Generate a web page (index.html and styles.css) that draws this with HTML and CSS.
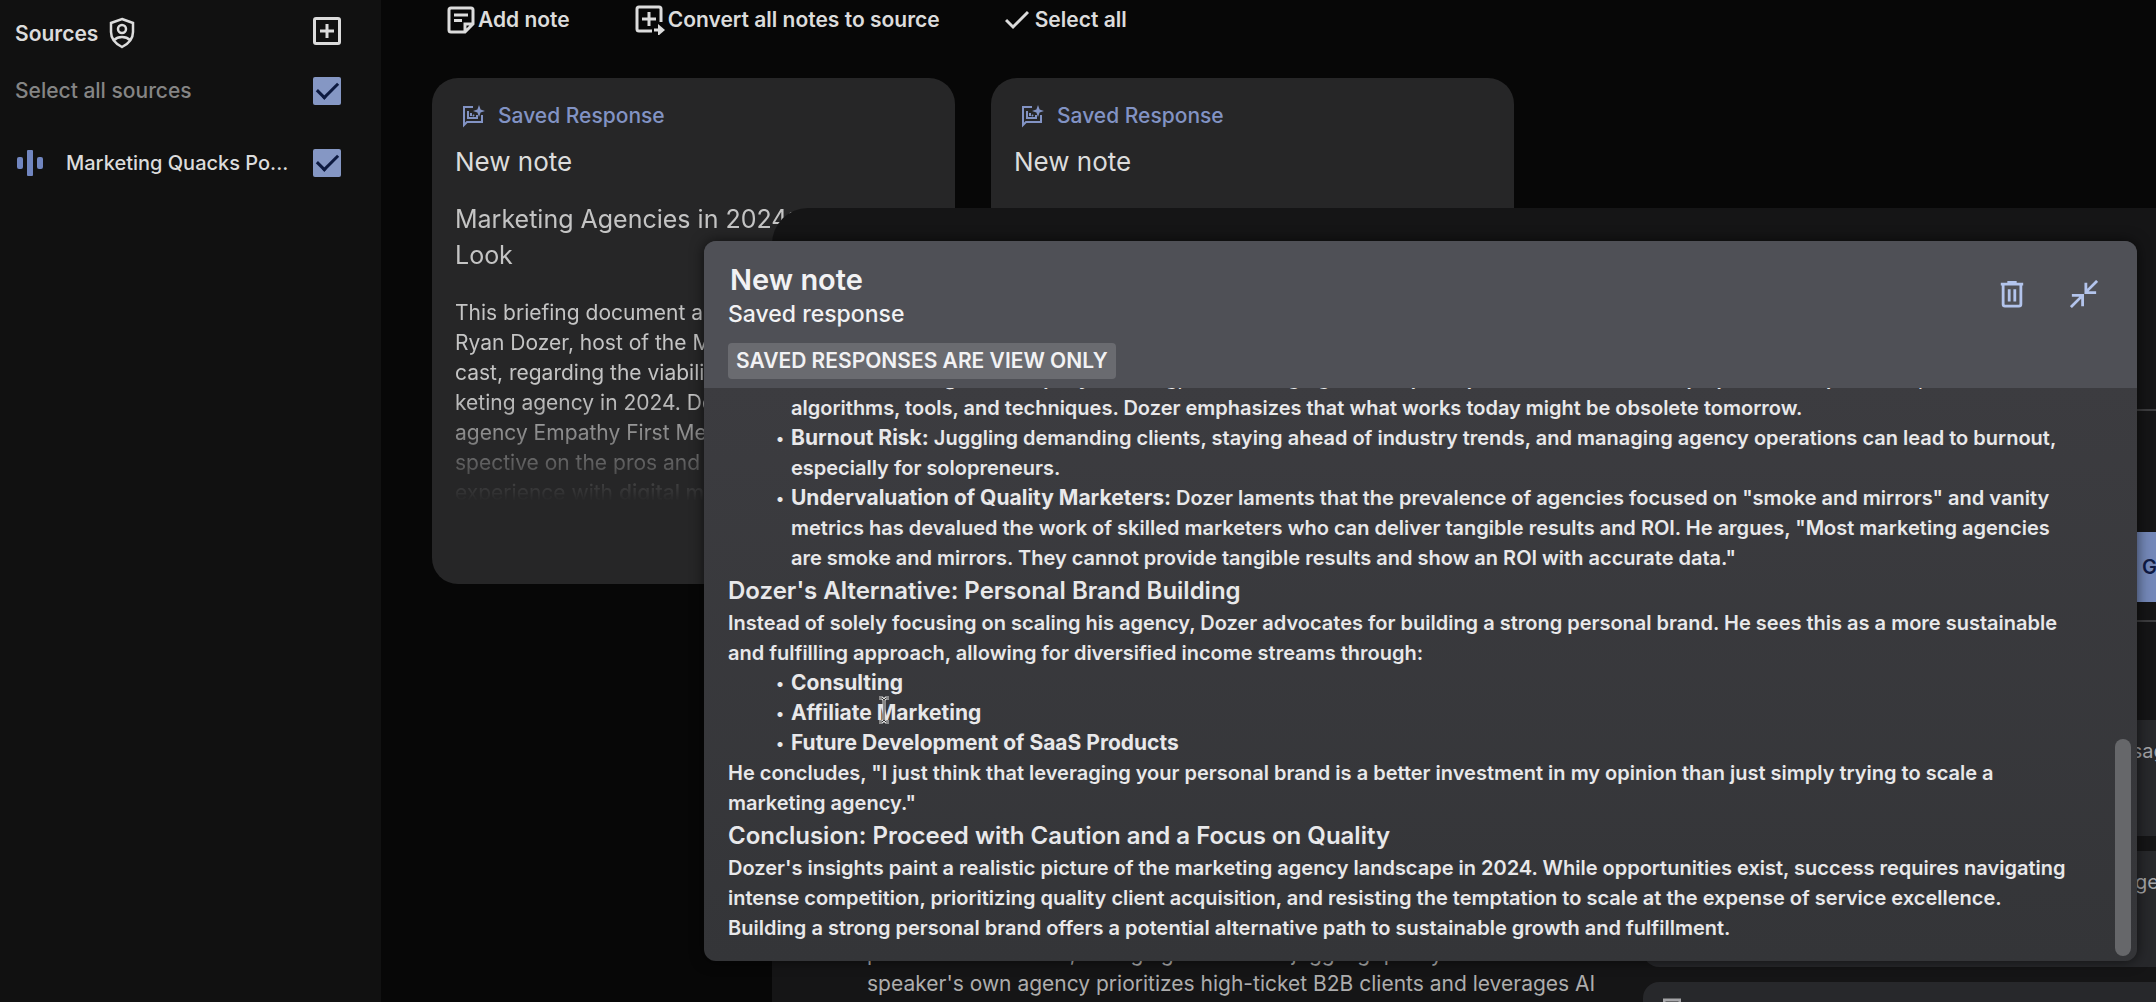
FILE: index.html
```html
<!DOCTYPE html>
<html lang="en">
<head>
    <meta charset="UTF-8">
    <title>Notebook</title>
    <link rel="stylesheet" href="styles.css">
</head>
<body>

<!-- shared icons -->
<svg class="sprite" aria-hidden="true">
    <symbol id="icon-saved" viewBox="0 0 24 24">
        <path d="M12 3H3v18l3-3h15v-7M7 7v7h9v-3M10 9v3M12 11l1 1" fill="none" stroke="currentColor" stroke-width="2"/>
        <path d="M18 1l1.600 4.400L24 7l-4.400 1.600L18 13l-1.600-4.400L12 7l4.400-1.600z" fill="currentColor"/>
    </symbol>
</svg>

<div class="app">
    <aside class="sidebar">
        <div class="sidebar-row sidebar-head">
            <h2>Sources</h2>
            <svg class="shield" viewBox="0 0 26 32" fill="none" stroke="currentColor" stroke-width="2.500">
                <path d="M13 2L24 6v9c0 7-5 12-11 15C7 27 2 22 2 15V6z"/>
                <circle cx="13" cy="12" r="4"/>
                <path d="M5 23c4-4 12-4 16 0"/>
            </svg>
            <button class="icon-btn add-source" aria-label="Add source">
                <svg viewBox="0 0 28 28" fill="none" stroke="currentColor" stroke-width="3">
                    <rect x="1.500" y="1.500" width="25" height="25" rx="1.500"/>
                    <path d="M14 7v14M7 14h14"/>
                </svg>
            </button>
        </div>
        <div class="sidebar-row select-all">
            <label for="allSources">Select all sources</label>
            <input type="checkbox" id="allSources" checked>
        </div>
        <div class="sidebar-row source">
            <svg class="wave" viewBox="0 0 26 26" fill="currentColor">
                <rect x="0" y="7" width="6" height="12" rx="2"/>
                <rect x="10" y="0" width="6" height="26" rx="1"/>
                <rect x="20" y="7" width="6" height="12" rx="2"/>
            </svg>
            <label for="source1">Marketing Quacks Po...</label>
            <input type="checkbox" id="source1" checked>
        </div>
    </aside>

    <main class="notes">
        <div class="toolbar">
            <button>
                <svg viewBox="0 0 28 28" fill="none" stroke="currentColor" stroke-width="3">
                    <path d="M18 26H4a2 2 0 0 1-2-2V4a2 2 0 0 1 2-2h20a2 2 0 0 1 2 2v14zM18 26v-8h8M7 9h14M7 14.500h8"/>
                </svg>Add note
            </button>
            <button>
                <svg class="convert" viewBox="0 0 30 30" fill="none" stroke="currentColor" stroke-width="3">
                    <path d="M17 26H4a2 2 0 0 1-2-2V4a2 2 0 0 1 2-2h20a2 2 0 0 1 2 2v13M14 7v14M7 14h14"/>
                    <path d="M19 25h5" /><path d="M23 19l7 6-7 6z" fill="currentColor" stroke="none"/>
                </svg>Convert all notes to source
            </button>
            <button class="select-notes">
                <svg class="check" viewBox="0 0 24 20" fill="none" stroke="currentColor" stroke-width="3">
                    <path d="M1 10l7 7L23 2"/>
                </svg>Select all
            </button>
        </div>

        <div class="cards">
            <article class="card">
                <div class="card-tag"><svg><use href="#icon-saved"/></svg>Saved Response</div>
                <h3>New note</h3>
                <div class="card-text">
                    <h4>Marketing Agencies in 2024: A Realistic<br>Look</h4>
                    <p>This briefing document analyzes advice by<br>
                    Ryan Dozer, host of the Marketing Quacks pod-<br>
                    cast, regarding the viability of starting a mar-<br>
                    keting agency in 2024. Dozer, who runs the<br>
                    agency Empathy First Media, offers his per-<br>
                    spective on the pros and cons based on his<br>
                    experience with <b>digital marketing</b>.</p>
                </div>
            </article>
            <article class="card">
                <div class="card-tag"><svg><use href="#icon-saved"/></svg>Saved Response</div>
                <h3>New note</h3>
            </article>
        </div>
    </main>
</div>

<section class="chat">
    <div class="summary">
        <p>potential for burnout, changing trends and juggling quality. The<br>
        speaker's own agency prioritizes high-ticket B2B clients and leverages AI</p>
    </div>
    <div class="guide">
        <div class="guide-audio">
            <button class="generate">Generate</button>
        </div>
        <div class="questions">
            <button class="question">How can a marketer grow brands with your message?</button>
            <button class="question">What are the biggest pros and cons of running agencies?</button>
            <button class="question last">
                <svg viewBox="0 0 18 18" fill="none" stroke="currentColor" stroke-width="3"><rect x="1" y="2" width="16" height="14"/></svg>
            </button>
        </div>
    </div>
</section>

<section class="note">
    <header class="note-head">
        <div>
            <h1>New note</h1>
            <p>Saved response</p>
            <span class="badge">SAVED RESPONSES ARE VIEW ONLY</span>
        </div>
        <div class="note-actions">
            <button class="icon-btn" aria-label="Delete note">
                <svg viewBox="0 0 30 30" fill="none" stroke="currentColor" stroke-width="3">
                    <path d="M3 4.500h24M10 2.500h10M5.500 5v21a2 2 0 0 0 2 2h15a2 2 0 0 0 2-2V5M12 10v13M18 10v13"/>
                </svg>
            </button>
            <button class="icon-btn" aria-label="Collapse note">
                <svg viewBox="0 0 30 30" fill="none" stroke="currentColor" stroke-width="3">
                    <path d="M29 1L17 13M17 3v10.500h11M1 29l12-12M2 16.500h11.500V28"/>
                </svg>
            </button>
        </div>
    </header>
    <div class="note-body">
        <ul>
            <li><b>Constant Change:</b> The rapidly evolving, ever-changing landscape requires marketers to keep up with new platforms,<br>
            algorithms, tools, and techniques. Dozer emphasizes that what works today might be obsolete tomorrow.</li>
            <li><b>Burnout Risk:</b> Juggling demanding clients, staying ahead of industry trends, and managing agency operations can lead to burnout, especially for solopreneurs.</li>
            <li><b>Undervaluation of Quality Marketers:</b> Dozer laments that the prevalence of agencies focused on "smoke and mirrors" and vanity metrics has devalued the work of skilled marketers who can deliver tangible results and ROI. He argues, "Most marketing agencies are smoke and mirrors. They cannot provide tangible results and show an ROI with accurate data."</li>
        </ul>
        <h2>Dozer's Alternative: Personal Brand Building</h2>
        <p>Instead of solely focusing on scaling his agency, Dozer advocates for building a strong personal brand. He sees this as a more sustainable and fulfilling approach, allowing for diversified income streams through:</p>
        <ul>
            <li><b>Consulting</b></li>
            <li><b>Affiliate Marketing</b>
                <svg class="cursor" viewBox="0 0 12 28" fill="none">
                    <path d="M1 2h3l2 2 2-2h3M6 4v20M1 26h3l2-2 2 2h3" stroke="#ddd" stroke-width="3"/>
                    <path d="M1 2h3l2 2 2-2h3M6 4v20M1 26h3l2-2 2 2h3" stroke="#333" stroke-width="1"/>
                </svg>
            </li>
            <li><b>Future Development of SaaS Products</b></li>
        </ul>
        <p>He concludes, "I just think that leveraging your personal brand is a better investment in my opinion than just simply trying to scale a marketing agency."</p>
        <h2>Conclusion: Proceed with Caution and a Focus on Quality</h2>
        <p>Dozer's insights paint a realistic picture of the marketing agency landscape in 2024. While opportunities exist, success requires navigating intense competition, prioritizing quality client acquisition, and resisting the temptation to scale at the expense of service excellence. Building a strong personal brand offers a potential alternative path to sustainable growth and fulfillment.</p>
        <div class="thumb"></div>
    </div>
</section>

</body>
</html>
```
FILE: styles.css
```css
* {
    box-sizing: border-box;
}

body {
    margin: 0;
    height: 100vh;
    overflow: hidden;
    position: relative;
    background: #070707;
    color: #dcdcdc;
    font-family: Inter, "Liberation Sans", sans-serif;
    font-size: 21px;
    line-height: 30px;
}

h1, h2, h3, h4, p, ul {
    margin: 0;
    padding: 0;
    font-weight: 500;
}

button {
    font: inherit;
    color: inherit;
    background: none;
    border: none;
    padding: 0;
}

svg {
    display: block;
    flex: none;
}

.sprite {
    position: absolute;
    width: 0;
    height: 0;
}

.app {
    display: grid;
    grid-template-columns: 381px 1fr;
    height: 100%;
}

/* sidebar */
.sidebar {
    background: #111;
    padding: 16px 40px 0 15px;
}

.sidebar-row {
    display: flex;
    align-items: center;
    height: 30px;
}

.sidebar-head h2 {
    padding-top: 5px;
    font-size: 21px;
    font-weight: 600;
}

.shield {
    width: 26px;
    height: 32px;
    margin: 4px 0 0 11px;
}

.icon-btn svg {
    width: 28px;
    height: 28px;
}

.add-source {
    margin-left: auto;
}

.select-all {
    margin-top: 30px;
    color: #858585;
    font-weight: 500;
}

.source {
    margin-top: 42px;
    font-size: 20px;
    font-weight: 500;
}

.sidebar-row input {
    appearance: none;
    width: 28px;
    height: 28px;
    margin: 0 0 0 auto;
    border-radius: 2px;
    background: #8597c4;
    display: grid;
    place-items: center;
}

.sidebar-row input::after {
    content: "";
    width: 18px;
    height: 9px;
    margin-bottom: 6px;
    border: solid #0d1a40;
    border-width: 0 0 3px 3px;
    transform: rotate(-45deg);
}

.wave {
    width: 26px;
    height: 26px;
    margin: 0 23px 0 2px;
    color: #7186c0;
}

/* saved notes */
.notes {
    padding: 5px 0 0 51px;
}

.toolbar {
    display: flex;
    gap: 65px;
    height: 30px;
    padding-left: 15px;
    font-weight: 600;
}

.toolbar button {
    display: flex;
    align-items: center;
    gap: 3px;
}

.toolbar svg {
    width: 28px;
    height: 28px;
}

.toolbar .convert {
    width: 30px;
    height: 30px;
}

.toolbar .check {
    width: 24px;
    height: 20px;
}

.toolbar .select-notes {
    gap: 6px;
}

.cards {
    display: grid;
    grid-template-columns: 523px 523px;
    gap: 36px;
    margin-top: 43px;
}

.card {
    min-height: 506px;
    padding: 23px 23px 0;
    border-radius: 26px;
    background: #262627;
}

.card-tag {
    display: flex;
    align-items: center;
    gap: 13px;
    padding-left: 6px;
    color: #8293c4;
    font-weight: 500;
}

.card-tag svg {
    width: 24px;
    height: 24px;
}

.card h3, .card h4 {
    font-size: 26px;
    line-height: 36px;
    font-weight: 400;
}

.card h3 {
    margin-top: 13px;
}

.card h4 {
    margin-bottom: 25px;
    font-size: 25px;
    white-space: nowrap;
}

.card-text {
    margin-top: 21px;
    height: 300px;
    overflow: hidden;
    color: #c4c4c4;
    mask-image: linear-gradient(#000 65%, transparent);
}

.card-text p {
    font-weight: 400;
    white-space: nowrap;
}

.card-text b {
    font-weight: 500;
}

/* chat panel behind the open note */
.chat {
    position: absolute;
    inset: 208px 0 0 772px;
    display: grid;
    grid-template-columns: 1fr 513px;
    grid-template-rows: 100%;
    border-top-left-radius: 36px;
    background: #151516;
    overflow: hidden;
}

.summary {
    display: flex;
    align-items: flex-end;
    padding: 0 0 3px 95px;
    color: #adadad;
    white-space: nowrap;
}

.summary p {
    font-weight: 400;
}

.guide {
    padding-top: 201px;
    font-size: 20px;
}

.guide-audio {
    display: flex;
    align-items: flex-end;
    height: 213px;
    padding: 0 0 18px 483px;
    border: solid #3c3c3e;
    border-width: 2px 0;
}

.generate {
    flex: none;
    width: 180px;
    height: 70px;
    padding-left: 16px;
    background: #7488b8;
    color: #0f1a44;
    font-weight: 600;
    text-align: left;
}

.questions {
    display: grid;
    gap: 15px;
    margin-top: 98px;
}

.question {
    height: 116px;
    padding: 16px 0 0 36px;
    border-radius: 16px 0 0 16px;
    background: #27282b;
    color: #a5a5a8;
    display: flex;
    align-items: flex-start;
    overflow: hidden;
    white-space: nowrap;
}

.question.last {
    padding-left: 20px;
}

.question svg {
    width: 18px;
    height: 18px;
}

/* open note */
.note {
    position: absolute;
    inset: 241px 19px 41px 704px;
    display: flex;
    flex-direction: column;
    border-radius: 12px;
    background: linear-gradient(#3c3c40 20%, #343538);
    box-shadow: 0 0 14px rgba(0, 0, 0, 0.6);
    color: #e8e8ea;
    font-size: 20px;
    overflow: hidden;
}

.note-head {
    display: flex;
    justify-content: space-between;
    height: 147px;
    padding: 20px 39px 0 24px;
    background: #4f5056;
    color: #f2f2f4;
}

.note-head h1 {
    padding-left: 2px;
    font-size: 29px;
    line-height: 38px;
    font-weight: 600;
}

.note-head p {
    font-size: 23px;
}

.badge {
    display: inline-block;
    height: 36px;
    margin-top: 14px;
    padding: 0 8px;
    border-radius: 4px;
    background: #6a6b70;
    font-size: 21px;
    font-weight: 600;
    line-height: 36px;
}

.note-actions {
    display: flex;
    gap: 44px;
    padding-top: 19px;
    align-items: flex-start;
    color: #b3c4ec;
}

.note-body {
    flex: 1;
    min-height: 0;
    position: relative;
    display: flex;
    flex-direction: column;
    justify-content: flex-end;
    padding: 0 60px 18px 24px;
    overflow: hidden;
}

.note-body p, .note-body li {
    font-weight: 600;
}

.note-body h2 {
    font-size: 24px;
    line-height: 35px;
    font-weight: 600;
}

.note-body ul {
    padding-left: 63px;
    list-style: none;
}

.note-body li {
    position: relative;
}

.note-body li::before {
    content: "•";
    position: absolute;
    left: -15px;
    font-size: 16px;
}

.note-body b {
    font-size: 21px;
    font-weight: 700;
}

.cursor {
    position: absolute;
    left: 87px;
    top: -2px;
    width: 12px;
    height: 28px;
}

.thumb {
    position: absolute;
    right: 6px;
    bottom: 5px;
    width: 16px;
    height: 217px;
    border-radius: 8px;
    background: #66676a;
}
```
